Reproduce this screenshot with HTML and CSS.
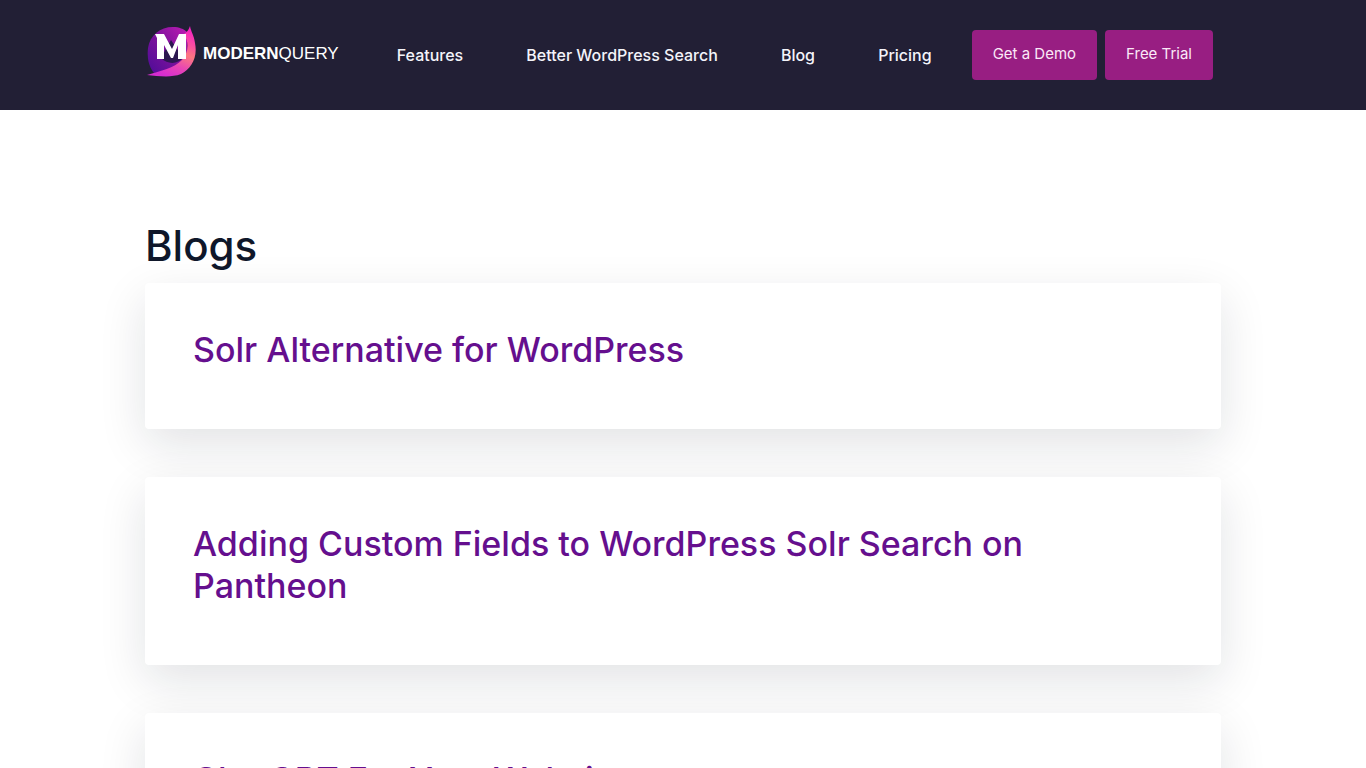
FILE: index.html
```
<!DOCTYPE html>
<html lang="en">
<head>
    <meta charset="UTF-8">
    <meta name="viewport" content="width=device-width, initial-scale=1.0">
    <title>Blogs - ModernQuery</title>
    <link rel="stylesheet" href="styles.css">
</head>
<body>
    <header class="site-header">
        <div class="container header-inner">
            <a class="logo" href="#">
                <svg class="logo-mark" viewBox="0 0 50 52" aria-hidden="true">
                    <defs>
                        <linearGradient id="disc" x1="0" y1="1" x2="1" y2="0">
                            <stop offset="0" stop-color="#4d0c98"/>
                            <stop offset="0.5" stop-color="#7c129c"/>
                            <stop offset="1" stop-color="#c01cb4"/>
                        </linearGradient>
                        <linearGradient id="leaf" x1="0.8" y1="0" x2="0.4" y2="1">
                            <stop offset="0" stop-color="#f41fc4"/>
                            <stop offset="0.3" stop-color="#fb4fa0"/>
                            <stop offset="0.5" stop-color="#fd7880"/>
                            <stop offset="0.75" stop-color="#e846b4"/>
                            <stop offset="1" stop-color="#d62cd0"/>
                        </linearGradient>
                    </defs>
                    <path fill="url(#disc)" d="M7 47C1 40 0 30 1 22C3 9 13 1 26 1C32 1 37 3 40 6L41 32L24 44Z"/>
                    <path fill="#2c1850" d="M14 32L24 14L36 32C31 38 21 39 14 32Z"/>
                    <path fill="url(#leaf)" d="M43 0C44 6 47 9 48 17C51 32 44 43 34 48C24 52 11 50 0 49C14 45 27 42 35 34C42 26 42 16 37 8Q41 6 43 0Z"/>
                    <path fill="#fff" d="M8 8H17L25 23L32 8H39V33H31V19L26 32H24L17 19V33H10V12Z"/>
                </svg>
                <span class="logo-text"><b>MODERN</b>QUERY</span>
            </a>
            <nav class="main-nav">
                <a href="#">Features</a>
                <a href="#">Better WordPress Search</a>
                <a href="#">Blog</a>
                <a href="#">Pricing</a>
            </nav>
            <div class="header-buttons">
                <button type="button" class="btn">Get a Demo</button>
                <button type="button" class="btn">Free Trial</button>
            </div>
        </div>
    </header>

    <main class="container blog-list">
        <h1>Blogs</h1>
        <article class="card">
            <h2><a href="#">Solr Alternative for WordPress</a></h2>
        </article>
        <article class="card">
            <h2><a href="#">Adding Custom Fields to WordPress Solr Search on Pantheon</a></h2>
        </article>
        <article class="card">
            <h2><a href="#">ChatGPT For Your Website</a></h2>
        </article>
    </main>
</body>
</html>
```
FILE: styles.css
```
* {
    box-sizing: border-box;
}
body {
    margin: 0;
    font-family: Inter, "Open Sans", sans-serif;
    background: #fff;
    color: #0f172a;
}
a {
    text-decoration: none;
}
.container {
    width: 100%;
    max-width: 1124px;
    margin: 0 auto;
    padding: 0 24px;
}
.site-header {
    background: #221f35;
}
.header-inner {
    display: flex;
    align-items: center;
    min-height: 110px;
    padding-right: 32px;
}
.logo {
    display: flex;
    align-items: center;
    gap: 6px;
    padding-left: 2px;
}
.logo-mark {
    width: 50px;
    height: 52px;
    margin-bottom: 6px;
}
.logo-text {
    padding-bottom: 2px;
    font-family: "Liberation Sans", Arial, sans-serif;
    font-size: 17px;
    color: #fff;
}
.main-nav {
    display: flex;
    flex: 1;
    justify-content: space-between;
    padding: 0 40px 0 58px;
}
.main-nav a {
    color: #f4f4fa;
    font-size: 16px;
    font-weight: 500;
    line-height: 24px;
    white-space: nowrap;
}
.header-buttons {
    display: flex;
    gap: 8px;
}
.btn {
    height: 50px;
    padding: 0 21px 3px;
    border: 0;
    border-radius: 4px;
    background: #981e82;
    color: #fbe9f8;
    font-family: inherit;
    font-size: 15px;
    font-weight: 400;
    white-space: nowrap;
    cursor: pointer;
}
.btn:hover {
    background: #84186f;
}
.blog-list {
    padding-top: 111px;
}
h1 {
    margin: 0 0 12px;
    font-size: 42px;
    font-weight: 500;
    line-height: 50px;
}
.card {
    margin-bottom: 48px;
    padding: 46px 48px 58px;
    border-radius: 4px;
    background: #fff;
    box-shadow: 0 16px 48px rgba(15, 23, 42, 0.12);
}
.card h2 {
    margin: 0;
    font-size: 34px;
    font-weight: 500;
    line-height: 42px;
}
.card a {
    color: #650f8e;
}
```
